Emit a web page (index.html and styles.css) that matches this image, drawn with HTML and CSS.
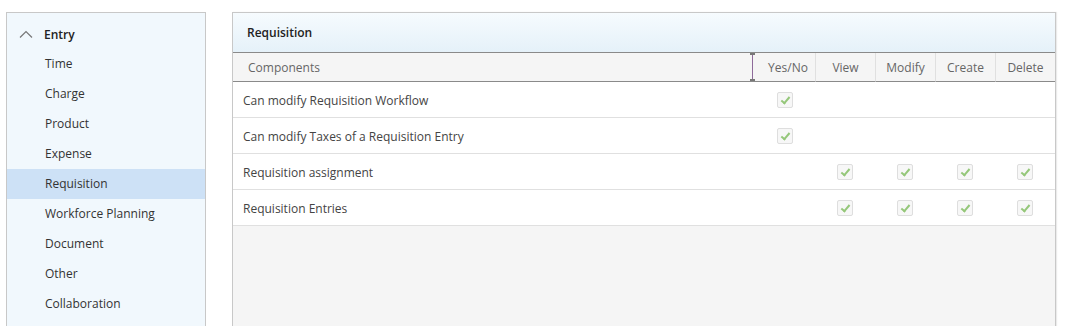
FILE: index.html
```html
<!DOCTYPE html>
<html>
<head>
<meta name="viewport" content="width=device-width, initial-scale=1">
<link rel="stylesheet" href="styles.css">
</head>
<body>

<div class="page">
  <div class="sidebar">
    <div class="group-title">
      <svg class="chevron" width="14" height="8" viewBox="0 0 14 8"><polyline points="1,7.5 7,1.5 13,7.5" fill="none" stroke="#777" stroke-width="1.2"/></svg>
      <span>Entry</span>
    </div>
    <div class="nav-item">Time</div>
    <div class="nav-item">Charge</div>
    <div class="nav-item">Product</div>
    <div class="nav-item">Expense</div>
    <div class="nav-item active">Requisition</div>
    <div class="nav-item">Workforce Planning</div>
    <div class="nav-item">Document</div>
    <div class="nav-item">Other</div>
    <div class="nav-item">Collaboration</div>
  </div>

  <div class="panel">
    <div class="panel-title">Requisition</div>
    <div class="grid">
      <div class="head first">Components<span class="resizer"></span></div>
      <div class="head">Yes/No</div>
      <div class="head">View</div>
      <div class="head">Modify</div>
      <div class="head">Create</div>
      <div class="head">Delete</div>

      <div class="cell first">Can modify Requisition Workflow</div>
      <div class="cell"><span class="check"></span></div>
      <div class="cell"></div>
      <div class="cell"></div>
      <div class="cell"></div>
      <div class="cell"></div>

      <div class="cell first">Can modify Taxes of a Requisition Entry</div>
      <div class="cell"><span class="check"></span></div>
      <div class="cell"></div>
      <div class="cell"></div>
      <div class="cell"></div>
      <div class="cell"></div>

      <div class="cell first">Requisition assignment</div>
      <div class="cell"></div>
      <div class="cell"><span class="check"></span></div>
      <div class="cell"><span class="check"></span></div>
      <div class="cell"><span class="check"></span></div>
      <div class="cell"><span class="check"></span></div>

      <div class="cell first">Requisition Entries</div>
      <div class="cell"></div>
      <div class="cell"><span class="check"></span></div>
      <div class="cell"><span class="check"></span></div>
      <div class="cell"><span class="check"></span></div>
      <div class="cell"><span class="check"></span></div>
    </div>
  </div>
</div>

</body>
</html>
```

FILE: styles.css
```css
body {
    margin: 0;
    background: #fff;
    font-family: "Open Sans", "Noto Sans", sans-serif;
    font-size: 12px;
    color: #333;
}

.page {
    display: flex;
    align-items: stretch;
    height: 326px;
    padding: 12px 0 0 6px;
    box-sizing: border-box;
    overflow: hidden;
}

/* Left navigation */
.sidebar {
    width: 200px;
    box-sizing: border-box;
    background: #f1f8fd;
    border: 1px solid #c8c8c8;
    border-bottom: none;
    padding-top: 6px;
}

.group-title {
    display: flex;
    align-items: center;
    height: 30px;
    padding-left: 12px;
    font-weight: 600;
    color: #222;
}

.chevron {
    margin-right: 11px;
}

.nav-item {
    height: 30px;
    line-height: 30px;
    padding-left: 38px;
}

.nav-item.active {
    background: #cde1f6;
}

/* Right panel */
.panel {
    margin-left: 26px;
    width: 824px;
    box-sizing: border-box;
    border: 1px solid #c8c8c8;
    border-bottom: none;
    background: #f5f5f5;
    box-shadow: 1px 0 1px rgba(0,0,0,0.08);
}

.panel-title {
    height: 39px;
    line-height: 39px;
    padding-left: 14px;
    font-weight: 600;
    color: #222;
    background: linear-gradient(#f6fbfe, #e5f1f9);
    border-bottom: 1px solid #8a8a8a;
}

.grid {
    display: grid;
    grid-template-columns: 1fr repeat(5, 60px);
}

.head {
    position: relative;
    height: 28px;
    line-height: 30px;
    background: #f5f5f5;
    color: #666;
    text-align: center;
    border-bottom: 1px solid #8a8a8a;
    border-left: 1px solid #e0e0e0;
}

.head.first {
    text-align: left;
    padding-left: 15px;
    border-left: none;
}

.head:nth-child(2) {
    border-left: none;
    padding-left: 6px;
}

/* column resize handle */
.resizer {
    position: absolute;
    right: 2px;
    top: 0;
    width: 1px;
    height: 28px;
    background: #8e6a9a;
}

.resizer:before,
.resizer:after {
    content: "";
    position: absolute;
    left: -2px;
    width: 5px;
    height: 2px;
    background: #777;
}

.resizer:before {
    top: 0;
}

.resizer:after {
    bottom: 0;
}

.cell {
    height: 35px;
    box-sizing: border-box;
    height: 36px;
    padding-top: 2px;
    display: flex;
    align-items: center;
    justify-content: center;
    background: #fff;
    color: #444;
    border-bottom: 1px solid #e0e0e0;
}

.cell.first {
    justify-content: flex-start;
    padding-left: 10px;
}

.check {
    position: relative;
    width: 14px;
    height: 14px;
    margin-top: -2px;
    border: 1px solid #dedede;
    border-radius: 2px;
    background: #f7f7f7;
}

.check:after {
    content: "";
    position: absolute;
    left: 5px;
    top: 2px;
    width: 3px;
    height: 7px;
    border: solid #95c77a;
    border-width: 0 2px 2px 0;
    transform: rotate(40deg);
}
```
